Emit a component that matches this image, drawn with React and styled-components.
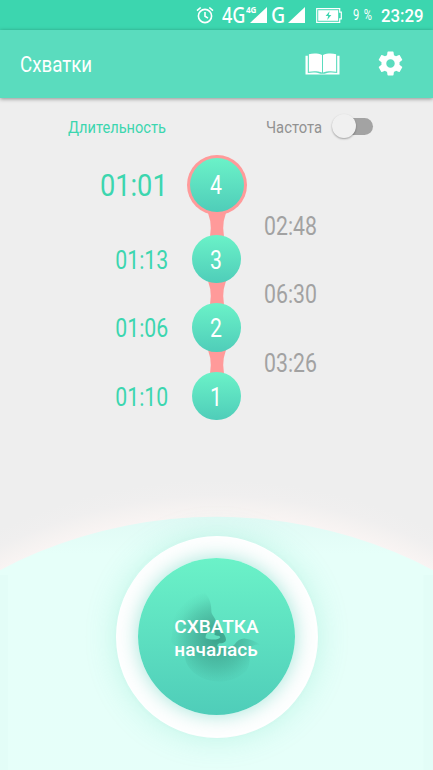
import React, { useState } from 'react'
import styled, { createGlobalStyle } from 'styled-components'

const GlobalStyle = createGlobalStyle`
    * {
        box-sizing: border-box;
    }
    body {
        margin: 0;
        background-color: #eeeeee;
        font-family: Roboto, sans-serif;
        overflow: hidden;
    }
`
const Screen = styled.div`
    width: 433px;
    height: 770px;
    display: flex;
    flex-direction: column;
    background-color: #eeeeee;
    overflow: hidden;
`
const StatusBar = styled.div`
    height: 30px;
    display: flex;
    align-items: center;
    padding-left: 196px;
    background-color: #3cd6af;
    color: #ffffff;
`
const StatusItem = styled.span`
    display: flex;
    flex: none;
    width: ${({w})=>w}px;
    margin-left: ${({gap})=>gap || 0}px;
    padding-top: ${({drop})=>drop || 0}px;
    padding-bottom: ${({lift})=>lift || 0}px;
`
// text squeezed to the width of the condensed face
const Narrow = styled.span`
    display: inline-block;
    white-space: nowrap;
    font-family: ${({family})=>family || 'Roboto, sans-serif'};
    font-size: ${({size})=>size}px;
    font-weight: ${({weight})=>weight || 400};
    line-height: 1.17;
    word-spacing: ${({space})=>space || 0}px;
    transform: scaleX(${({squeeze})=>squeeze || 0.85});
    transform-origin: ${({origin})=>origin || 'left'} center;
`
const Header = styled.header`
    flex: none;
    height: 67.5px;
    display: flex;
    align-items: center;
    padding: 0 28.5px 0 19.5px;
    background-color: #5adcbe;
    color: #ffffff;
    box-shadow: 0 1px 4px rgba(0, 0, 0, 0.4);
`
const Title = styled.h1`
    flex: 1;
    margin: 0;
    padding-top: 3px;
    font-size: 22px;
    font-weight: 400;
    line-height: 1;
`
const IconButton = styled.button`
    display: flex;
    padding: ${({drop})=>drop || 0}px 0 0;
    margin-left: ${({gap})=>gap || 0}px;
    border: none;
    background: none;
    color: #ffffff;
`
const Modes = styled.div`
    display: flex;
    align-items: center;
    height: 57px;
    padding-left: 68px;
`
const ModeLabel = styled.span`
    width: ${({w})=>w}px;
    padding-top: 2px;
    color: ${({active})=>(active? '#3cd6af': '#929292')};
`
const Track = styled.button`
    width: 39px;
    height: 17px;
    padding: 0;
    display: flex;
    align-items: center;
    justify-content: ${({on})=>(on? 'flex-end': 'flex-start')};
    border: none;
    border-radius: 9px;
    background-color: #a3a3a3;
`
const Thumb = styled.span`
    width: 24px;
    height: 24px;
    flex: none;
    margin-left: -2px;
    border-radius: 50%;
    background-color: #f0f0f0;
    box-shadow: 0 1px 2px rgba(0, 0, 0, 0.33);
`
const Timeline = styled.div`
    display: flex;
    flex-direction: column;
`
const Row = styled.div`
    display: grid;
    grid-template-columns: 168px 97px 1fr;
    align-items: center;
    height: ${({h})=>h}px;
`
const Duration = styled.span`
    grid-column: 1;
    text-align: right;
    padding-top: 3px;
    color: #3cd6af;
`
const Frequency = styled.span`
    grid-column: 3;
    margin: -3px 0 0 -1px;
    color: #a2a2a2;
`
const Middle = styled.span`
    grid-column: 2;
    display: flex;
    justify-content: center;
`
const Bubble = styled.span`
    position: relative;
    z-index: 1;
    width: ${({big})=>(big? 60: 48.4)}px;
    height: ${({big})=>(big? 60: 48.4)}px;
    display: flex;
    align-items: center;
    justify-content: center;
    border-radius: 50%;
    padding: ${({big})=>(big? '3px': 0)};
    background: ${({big})=>(big? '#ff9a9a': 'none')};
`
const BubbleFace = styled.span`
    width: 100%;
    height: 100%;
    display: flex;
    align-items: center;
    justify-content: center;
    border-radius: 50%;
    padding-top: 3px;
    background: linear-gradient(#6bf2c8, #4fcdb9);
    color: #ffffff;
`
const Neck = styled.svg`
    display: block;
    overflow: visible;
`
const Bottom = styled.div`
    flex: 1;
    display: flex;
    flex-direction: column;
    align-items: center;
    position: relative;
    padding-top: 115.7px;
`
const Glow = styled.svg`
    position: absolute;
    left: 0;
    bottom: 0;
`
const Ring = styled.div`
    position: relative;
    width: 202px;
    height: 202px;
    display: flex;
    align-items: center;
    justify-content: center;
    border-radius: 50%;
    background-color: #ffffff;
    box-shadow: 0 0 30px rgba(70, 214, 180, 0.25);
`
const StartButton = styled.button`
    width: 157px;
    height: 157px;
    display: grid;
    place-items: center;
    padding: 0;
    border: none;
    border-radius: 50%;
    background: linear-gradient(#6bf2c8, #4fcdb9);
    box-shadow: 0 0 20px rgba(70, 204, 180, 0.5);
    color: #ffffff;
`
const Baby = styled.svg`
    grid-area: 1 / 1;
`
const StartLabel = styled.span`
    grid-area: 1 / 1;
    z-index: 1;
    padding-top: 2px;
    font-family: Roboto, sans-serif;
    font-size: 19px;
    font-weight: 500;
    line-height: 23px;
    text-align: left;
    white-space: pre-line;
`

const contractions = [
    { number: 4, duration: '01:01', pause: '02:48' },
    { number: 3, duration: '01:13', pause: '06:30' },
    { number: 2, duration: '01:06', pause: '03:26' },
    { number: 1, duration: '01:10' },
]

function AlarmIcon() {
    return (
        <svg width="18" height="18" viewBox="0 0 18 18" fill="none" stroke="#fff" strokeWidth="1.6">
            <circle cx="9" cy="10" r="6.6" />
            <path d="M9 6v4.3l3 1.8M1 4.6l3.7-3.1M17 4.6l-3.7-3.1" />
        </svg>
    )
}

function SignalIcon() {
    return (
        <svg width="17" height="16" viewBox="0 0 17 16" fill="#fff">
            <path d="M17 0v16H0z" />
        </svg>
    )
}

function BatteryIcon() {
    return (
        <svg width="26" height="15" viewBox="0 0 26 15">
            <path d="M.7.7h23v3.4h1.6v6.8h-1.6v3.4H.7z" fill="none" stroke="#fff" strokeWidth="1.2" />
            <path d="M2.2 2.2h20v10.6h-20z" fill="#fff" />
            <path d="M13.6 3.2l-4 4.8h2.6l-1 4 4.2-5.1h-2.7z" fill="#3cd6af" />
        </svg>
    )
}

function BookIcon() {
    return (
        <svg width="35" height="22" viewBox="0 0 35 22" fill="#fff">
            <path d="M3.9 1.3C7.5.3 13 .2 17 2v17.6c-3.9-1.6-9-1.6-13.1-.8zM31.1 1.3C27.5.3 22 .2 18 2v17.6c3.9-1.6 9-1.6 13.1-.8z" />
            <path d="M.5 2.8h2.3V20c4.7-.9 9.3-.7 12.6.7h4.2c3.3-1.4 7.9-1.6 12.6-.7V2.8h2.3v18.8H.5z" />
        </svg>
    )
}

function GearIcon() {
    return (
        <svg width="29" height="29" viewBox="0 0 24 24" fill="#fff">
            <path d="M19.43 12.98c.04-.32.07-.64.07-.98s-.03-.66-.07-.98l2.11-1.65c.19-.15.24-.42.12-.64l-2-3.46c-.12-.22-.39-.3-.61-.22l-2.49 1c-.52-.4-1.08-.73-1.69-.98l-.38-2.65C14.46 2.18 14.25 2 14 2h-4c-.25 0-.46.18-.49.42l-.38 2.65c-.61.25-1.17.59-1.69.98l-2.49-1c-.23-.09-.49 0-.61.22l-2 3.46c-.13.22-.07.49.12.64l2.11 1.65c-.04.32-.07.65-.07.98s.03.66.07.98l-2.11 1.65c-.19.15-.24.42-.12.64l2 3.46c.12.22.39.3.61.22l2.49-1c.52.4 1.08.73 1.69.98l.38 2.65c.03.24.24.42.49.42h4c.25 0 .46-.18.49-.42l.38-2.65c.61-.25 1.17-.59 1.69-.98l2.49 1c.23.09.49 0 .61-.22l2-3.46c.12-.22.07-.49-.12-.64l-2.11-1.65zM12 15.5c-1.93 0-3.5-1.57-3.5-3.5s1.57-3.5 3.5-3.5 3.5 1.57 3.5 3.5-1.57 3.5-3.5 3.5z" />
        </svg>
    )
}

function Hill() {
    return (
        <Glow width="433" height="350" viewBox="0 420 433 350">
            <defs>
                <radialGradient id="halo" gradientUnits="userSpaceOnUse" cx="216.5" cy="982" r="515">
                    <stop offset="0.903" stopColor="#f9f4f3" />
                    <stop offset="0.922" stopColor="#f5f2f1" />
                    <stop offset="0.945" stopColor="#f0efef" />
                    <stop offset="0.975" stopColor="#eeeeee" />
                    <stop offset="1" stopColor="#eeeeee" />
                </radialGradient>
                <linearGradient id="hill" x1="0" y1="0" x2="0" y2="1">
                    <stop offset="0" stopColor="#e0faf5" />
                    <stop offset="0.04" stopColor="#e6fff9" />
                    <stop offset="1" stopColor="#e6fffa" />
                </linearGradient>
            </defs>
            <circle cx="216.5" cy="982" r="515" fill="url(#halo)" />
            <circle cx="216.5" cy="982" r="465.3" fill="url(#hill)" />
            <path d="M0 575h8v195H0zM423.5 575h9.5v195h-9.5z" fill="#d8f5ee" opacity="0.2" />
        </Glow>
    )
}

function BabyShadow() {
    return (
        <Baby width="157" height="157" viewBox="83 85 471 471">
            <defs>
                <radialGradient id="baby" gradientUnits="userSpaceOnUse" cx="320" cy="325" r="145">
                    <stop offset="0" stopColor="#369e86" stopOpacity="0.9" />
                    <stop offset="0.25" stopColor="#3a9a86" stopOpacity="0.7" />
                    <stop offset="0.6" stopColor="#3a9a86" stopOpacity="0.37" />
                    <stop offset="0.85" stopColor="#3a9a86" stopOpacity="0.09" />
                    <stop offset="1" stopColor="#3a9a86" stopOpacity="0" />
                </radialGradient>
            </defs>
            <path
                fill="url(#baby)"
                d="M283 190c14 12 21 34 20 56 2 12 13 18 17 38 4 14 27 30 27 46-1 8-9 11-20 11-7 3-8 10-2 12 18 4 36 4 47-8 10-14 21-20 34-18 18 2 30 9 44 18-22-2-34 8-34 24 4 20 2 40-8 54-50 50-140 40-175-14-12-18-8-40-14-56-22-2-38-10-38-22 12-30-2-62 20-92 20-26 50-44 82-49z"
            />
            <path
                fill="#62dfbf"
                d="M286 326c-2-12 6-20 24-21 8 1 4 5 2 9 2 6 16 2 18 9-4 9-30 8-44 3z"
            />
        </Baby>
    )
}

function Contraction({item, first}) {
    return (
        <>
            <Row h={first? 60: 48.4}>
                <Duration>
                    <Narrow size={first? 32: 25} origin="right">{item.duration}</Narrow>
                </Duration>
                <Middle>
                    <Bubble big={first}>
                        <BubbleFace>
                            <Narrow size={25} origin="center">{item.number}</Narrow>
                        </BubbleFace>
                    </Bubble>
                </Middle>
            </Row>
            {item.pause &&
                <Row h={20.2}>
                    <Middle>
                        <Neck width="18" height="20.2" viewBox="0 0 18 20.2">
                            <path d="M0 -5Q5.600 10.100 0 25.200H18Q12.400 10.100 18 -5z" fill="#ff9a9a" />
                        </Neck>
                    </Middle>
                    <Frequency><Narrow size={25}>{item.pause}</Narrow></Frequency>
                </Row>
            }
        </>
    )
}

function App() {
    const [frequency, setFrequency] = useState(false)

    return (
        <Screen>
            <GlobalStyle />
            <StatusBar>
                <StatusItem w={18}><AlarmIcon /></StatusItem>
                <StatusItem w={24} gap={8} drop={1}><Narrow size={21} weight={500} family='"Noto Sans", sans-serif' squeeze={0.86}>4G</Narrow></StatusItem>
                <StatusItem w={4} lift={11}><Narrow size={9.5} weight={700} family='"Noto Sans", sans-serif'>4G</Narrow></StatusItem>
                <StatusItem w={17}><SignalIcon /></StatusItem>
                <StatusItem w={16} gap={4} drop={1}><Narrow size={21} weight={500} family='"Noto Sans", sans-serif' squeeze={0.93}>G</Narrow></StatusItem>
                <StatusItem w={17} gap={1}><SignalIcon /></StatusItem>
                <StatusItem w={26} gap={11}><BatteryIcon /></StatusItem>
                <StatusItem w={21} gap={11} drop={1}><Narrow size={14} squeeze={0.8} space={2}>9 %</Narrow></StatusItem>
                <StatusItem w={43} gap={7} drop={2}><Narrow size={17.5} weight={500} squeeze={0.96}>23:29</Narrow></StatusItem>
            </StatusBar>
            <Header>
                <Title><Narrow size={22}>Схватки</Narrow></Title>
                <IconButton drop={1}><BookIcon /></IconButton>
                <IconButton gap={35.5}><GearIcon /></IconButton>
            </Header>
            <Modes>
                <ModeLabel active w={198}><Narrow size={17.2}>Длительность</Narrow></ModeLabel>
                <ModeLabel w={68}><Narrow size={17.2} squeeze={0.86}>Частота</Narrow></ModeLabel>
                <Track on={frequency} onClick={()=>setFrequency(!frequency)}><Thumb /></Track>
            </Modes>
            <Timeline>
                {contractions.map((item, i)=>(
                    <Contraction key={item.number} item={item} first={i === 0} />
                ))}
            </Timeline>
            <Bottom>
                <Hill />
                <Ring>
                    <StartButton>
                        <BabyShadow />
                        <StartLabel>{'СХВАТКА\nначалась'}</StartLabel>
                    </StartButton>
                </Ring>
            </Bottom>
        </Screen>
    )
}

export default App
